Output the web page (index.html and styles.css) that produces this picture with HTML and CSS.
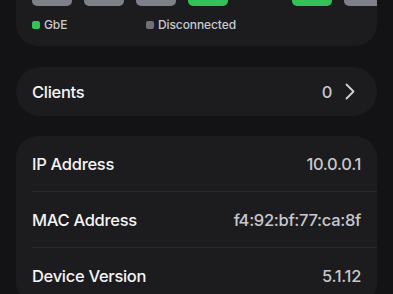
FILE: index.html
```html
<!DOCTYPE html>
<html lang="en">
<head>
    <meta charset="UTF-8">
    <meta name="viewport" content="width=device-width, initial-scale=1.0">
    <title>Device</title>
    <link rel="stylesheet" href="styles.css">
</head>
<body>
    <div class="page">
        <!-- Ports card -->
        <div class="card ports-card">
            <div class="ports">
                <div class="port grey"></div>
                <div class="port grey"></div>
                <div class="port grey"></div>
                <div class="port green"></div>
                <div class="port empty"></div>
                <div class="port green"></div>
                <div class="port grey"></div>
            </div>
            <div class="legend">
                <div class="legend-item"><span class="dot green"></span>GbE</div>
                <div class="legend-item"><span class="dot grey-dot"></span>Disconnected</div>
            </div>
        </div>

        <!-- Clients -->
        <div class="card clients-card">
            <span class="label">Clients</span>
            <span class="clients-right">
                <span class="count">0</span>
                <svg class="chevron" width="10" height="17" viewBox="0 0 10 17">
                    <path d="M1.5 1.5 L8.5 8.5 L1.5 15.5" fill="none" stroke="#d2d2d5" stroke-width="1.8" stroke-linecap="round" stroke-linejoin="round"/>
                </svg>
            </span>
        </div>

        <!-- Info -->
        <div class="card info-card">
            <div class="row">
                <span class="label">IP Address</span>
                <span class="value">10.0.0.1</span>
            </div>
            <div class="row">
                <span class="label">MAC Address</span>
                <span class="value">f4:92:bf:77:ca:8f</span>
            </div>
            <div class="row">
                <span class="label">Device Version</span>
                <span class="value">5.1.12</span>
            </div>
        </div>
    </div>
</body>
</html>
```

FILE: styles.css
```css
body {
    margin: 0;
    background-color: #131315;
    font-family: Inter, "Noto Sans", sans-serif;
    color: #f2f2f4;
    overflow: hidden;
}

.page {
    padding: 0 16px;
    margin-top: -45px; /* scrolled: top of the ports card is off screen */
}

.card {
    background-color: #1c1c1f;
    border-radius: 22px;
    overflow: hidden;
}

/* Ports card */
.ports-card {
    padding: 16px 0 14px 16px;
}

.ports {
    display: flex;
    gap: 12px;
}

.port {
    flex: none;
    width: 40px;
    height: 35px;
    border-radius: 5px;
}

.port.grey {
    background-color: #7d8089;
}

.port.green {
    background-color: #32c257;
}

.port.empty {
    background: none;
}

.legend {
    display: grid;
    grid-template-columns: 114px auto;
    margin-top: 11px;
    font-size: 12px;
    font-weight: 500;
    letter-spacing: -0.1px;
    color: #c9c9cd;
}

.legend-item {
    display: flex;
    align-items: center;
    gap: 4px;
}

.dot {
    width: 8px;
    height: 8px;
    border-radius: 2px;
}

.dot.green {
    background-color: #32c257;
}

.dot.grey-dot {
    background-color: #6f7078;
}

/* Clients card */
.clients-card {
    margin-top: 21px;
    height: 49px;
    border-radius: 25px;
    padding: 0 22px 0 16px;
    display: flex;
    align-items: center;
    justify-content: space-between;
}

.label,
.count,
.value {
    font-size: 16.5px;
    font-weight: 500;
    letter-spacing: -0.3px;
}

.label {
    color: #f4f4f6;
}

.clients-right {
    display: flex;
    align-items: center;
    gap: 13px;
}

.count {
    color: #c8c8cc;
}

.chevron {
    display: block;
}

/* Info card */
.info-card {
    margin-top: 20px;
    padding-left: 16px;
}

.row {
    height: 55px;
    display: flex;
    align-items: center;
    justify-content: space-between;
    padding-right: 16px;
    border-bottom: 1px solid #2a2a2e;
}

.value {
    color: #c8c8cc;
}
```
